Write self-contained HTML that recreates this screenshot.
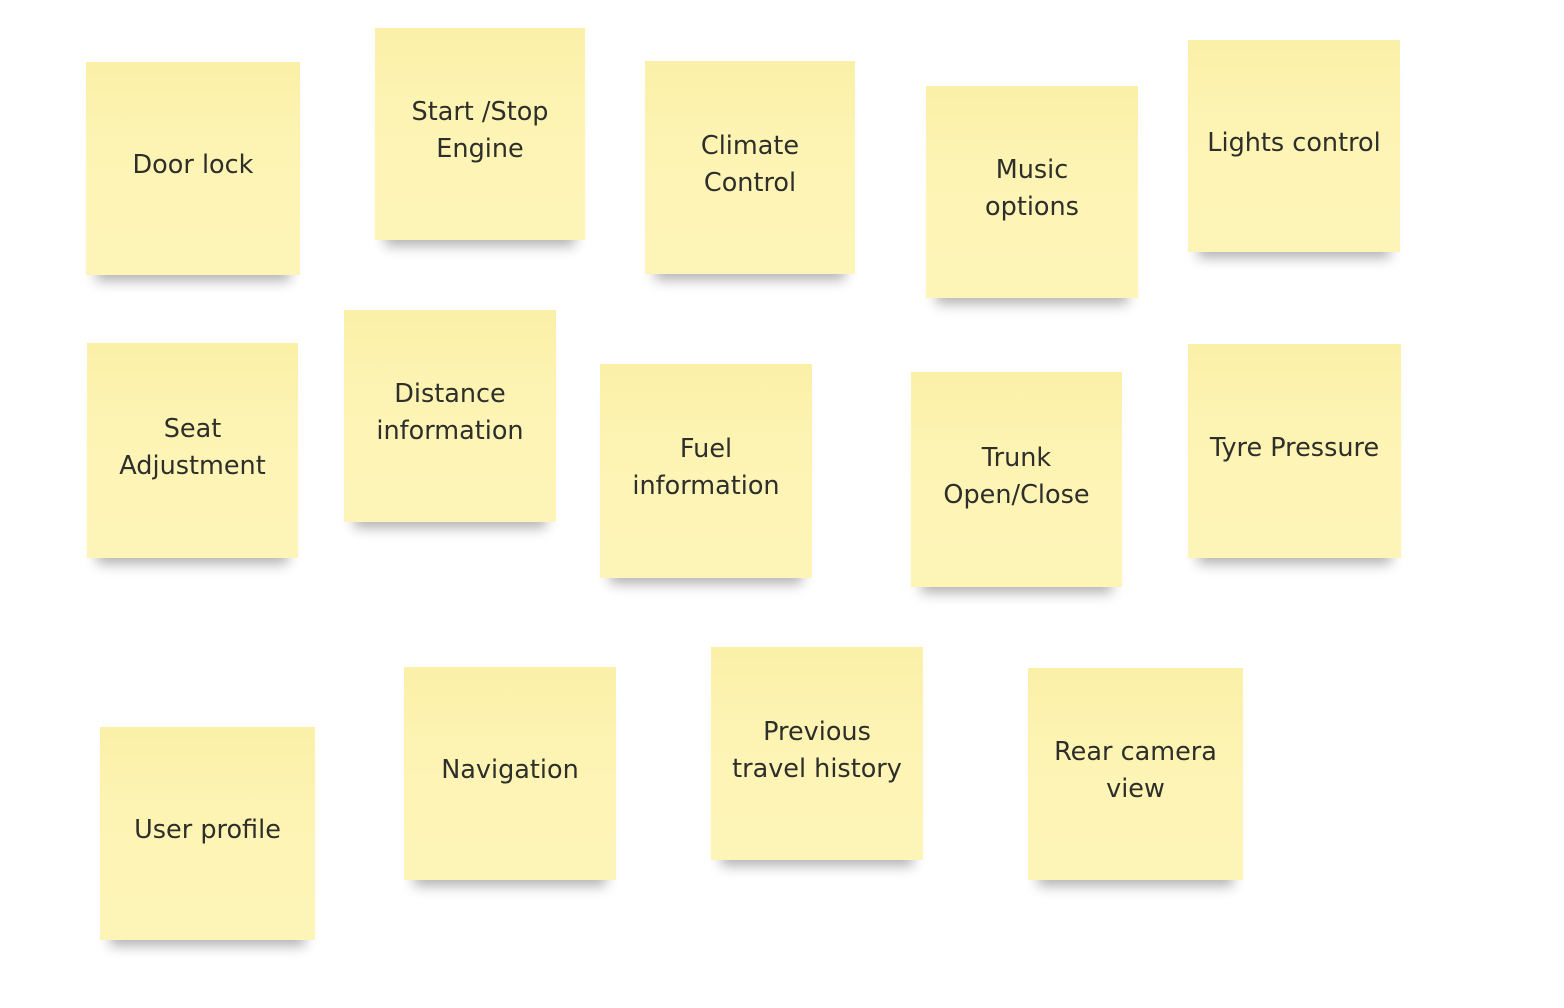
<!DOCTYPE html>
<html><head><meta charset="utf-8"><style>
html,body{margin:0;padding:0;background:#fff;width:1564px;height:1008px;overflow:hidden;}
.n{position:absolute;background:linear-gradient(180deg,#fbf0a8 0%,#fdf4b4 40%,#fdf5b8 100%);
box-shadow:0 16px 12px -10px rgba(0,0,0,0.3);display:flex;align-items:center;justify-content:center;
text-align:center;font-family:"DejaVu Sans","Liberation Sans",sans-serif;font-size:25.5px;line-height:37px;color:#2e2e2a;box-sizing:border-box;padding-bottom:6px;white-space:nowrap;}
</style></head><body>
<div class="n" style="left:86px;top:62px;width:214px;height:213px">Door lock</div>
<div class="n" style="left:375px;top:28px;width:210px;height:212px">Start /Stop<br>Engine</div>
<div class="n" style="left:645px;top:61px;width:210px;height:213px">Climate<br>Control</div>
<div class="n" style="left:926px;top:86px;width:212px;height:212px">Music<br>options</div>
<div class="n" style="left:1188px;top:40px;width:212px;height:212px">Lights control</div>
<div class="n" style="left:87px;top:343px;width:211px;height:215px">Seat<br>Adjustment</div>
<div class="n" style="left:344px;top:310px;width:212px;height:212px">Distance<br>information</div>
<div class="n" style="left:600px;top:364px;width:212px;height:214px">Fuel<br>information</div>
<div class="n" style="left:911px;top:372px;width:211px;height:215px">Trunk<br>Open/Close</div>
<div class="n" style="left:1188px;top:344px;width:213px;height:214px">Tyre Pressure</div>
<div class="n" style="left:100px;top:727px;width:215px;height:213px">User profile</div>
<div class="n" style="left:404px;top:667px;width:212px;height:213px">Navigation</div>
<div class="n" style="left:711px;top:647px;width:212px;height:213px">Previous<br>travel history</div>
<div class="n" style="left:1028px;top:668px;width:215px;height:212px">Rear camera<br>view</div>
</body></html>
